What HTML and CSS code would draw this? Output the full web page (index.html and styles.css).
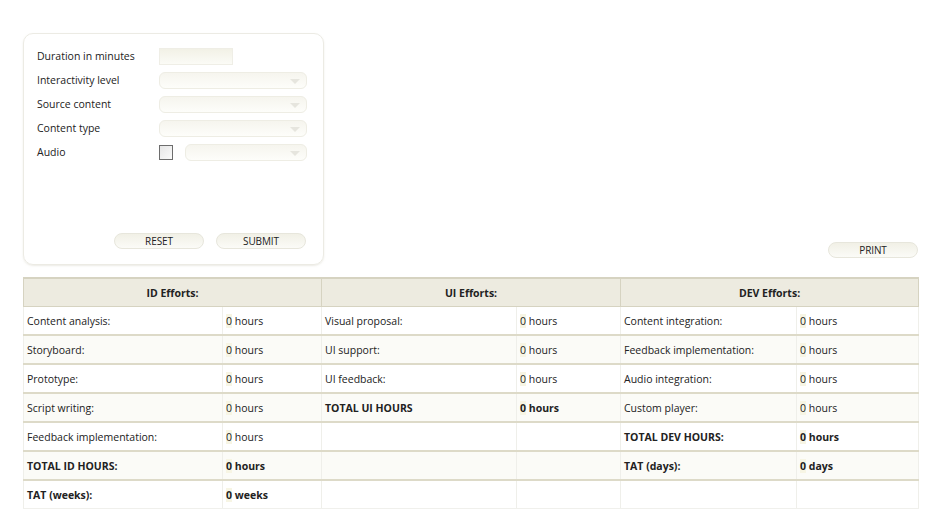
FILE: index.html
```html
<!DOCTYPE html>
<html>
<head>
<meta charset="utf-8">
<link rel="stylesheet" href="styles.css">
</head>
<body>
<div class="page">
  <div class="top">
    <form class="panel">
      <div class="frow"><span class="lbl">Duration in minutes</span><span class="txt"></span></div>
      <div class="frow"><span class="lbl">Interactivity level</span><span class="sel"><i class="arr"></i></span></div>
      <div class="frow"><span class="lbl">Source content</span><span class="sel"><i class="arr"></i></span></div>
      <div class="frow"><span class="lbl">Content type</span><span class="sel"><i class="arr"></i></span></div>
      <div class="frow"><span class="lbl">Audio</span><span class="chk"></span><span class="sel sel-short"><i class="arr"></i></span></div>
      <div class="btns">
        <span class="btn">RESET</span>
        <span class="btn">SUBMIT</span>
      </div>
    </form>
    <span class="btn print">PRINT</span>
  </div>
  <table class="grid">
    <colgroup>
      <col style="width:199px"><col style="width:99px">
      <col style="width:195px"><col style="width:104px">
      <col style="width:176px"><col style="width:122px">
    </colgroup>
    <thead>
      <tr><th colspan="2">ID Efforts:</th><th colspan="2">UI Efforts:</th><th colspan="2">DEV Efforts:</th></tr>
    </thead>
    <tbody>
      <tr>
        <td>Content analysis:</td><td><span class="v">0</span> hours</td>
        <td>Visual proposal:</td><td><span class="v">0</span> hours</td>
        <td>Content integration:</td><td><span class="v">0</span> hours</td>
      </tr>
      <tr>
        <td>Storyboard:</td><td><span class="v">0</span> hours</td>
        <td>UI support:</td><td><span class="v">0</span> hours</td>
        <td>Feedback implementation:</td><td><span class="v">0</span> hours</td>
      </tr>
      <tr>
        <td>Prototype:</td><td><span class="v">0</span> hours</td>
        <td>UI feedback:</td><td><span class="v">0</span> hours</td>
        <td>Audio integration:</td><td><span class="v">0</span> hours</td>
      </tr>
      <tr>
        <td>Script writing:</td><td><span class="v">0</span> hours</td>
        <td class="b">TOTAL UI HOURS</td><td class="b"><span class="v">0</span> hours</td>
        <td>Custom player:</td><td><span class="v">0</span> hours</td>
      </tr>
      <tr>
        <td>Feedback implementation:</td><td><span class="v">0</span> hours</td>
        <td></td><td></td>
        <td class="b">TOTAL DEV HOURS:</td><td class="b"><span class="v">0</span> hours</td>
      </tr>
      <tr>
        <td class="b">TOTAL ID HOURS:</td><td class="b"><span class="v">0</span> hours</td>
        <td></td><td></td>
        <td class="b">TAT (days):</td><td class="b"><span class="v">0</span> days</td>
      </tr>
      <tr>
        <td class="b">TAT (weeks):</td><td class="b"><span class="v">0</span> weeks</td>
        <td></td><td></td>
        <td></td><td></td>
      </tr>
    </tbody>
  </table>
</div>
</body>
</html>
```

FILE: styles.css
```css
html, body {
  margin: 0;
  padding: 0;
  background: #ffffff;
}
body {
  font-family: "Open Sans", "DejaVu Sans", sans-serif;
  font-size: 10.5px;
  color: #222;
}
.page {
  padding: 33px 0 0 23px;
  width: 895px;
}
.top {
  display: flex;
  justify-content: space-between;
  align-items: flex-end;
}
.panel {
  box-sizing: border-box;
  width: 301px;
  height: 232px;
  margin: 0;
  border: 1px solid #ecebe4;
  border-radius: 10px;
  box-shadow: 0 1px 2px rgba(200, 198, 180, 0.35);
  padding: 14px 16px 15px 13px;
  display: flex;
  flex-direction: column;
  gap: 8px;
}
.frow {
  display: flex;
  align-items: center;
  height: 16px;
}
.lbl {
  width: 122px;
  color: #222;
}
.txt {
  box-sizing: border-box;
  width: 74px;
  height: 17px;
  border: 1px solid #efeee6;
  background: linear-gradient(#f2f1e6, #fbfbf6);
}
.sel {
  position: relative;
  box-sizing: border-box;
  width: 148px;
  height: 17px;
  border: 1px solid #eeede4;
  border-radius: 6px;
  background: linear-gradient(#f6f5ee, #fdfdfa);
}
.sel-short {
  width: 122px;
  margin-left: 12px;
}
.arr {
  position: absolute;
  right: 6px;
  top: 6px;
  width: 0;
  height: 0;
  border-left: 5px solid transparent;
  border-right: 5px solid transparent;
  border-top: 5px solid #e6e5de;
}
.chk {
  box-sizing: border-box;
  width: 14px;
  height: 15px;
  border: 1px solid #6d6d6d;
  background: linear-gradient(135deg, #e6e6e6, #fafafa);
}
.btns {
  margin-top: auto;
  display: flex;
  justify-content: flex-end;
  gap: 12px;
  padding-right: 1px;
}
.btn {
  box-sizing: border-box;
  display: inline-flex;
  align-items: center;
  justify-content: center;
  width: 90px;
  height: 16px;
  border: 1px solid #e7e6dc;
  border-radius: 8px;
  background: linear-gradient(#f1f0e6, #fbfbf7);
  font-size: 10px;
  color: #222;
  letter-spacing: -0.1px;
}
.print {
  margin-bottom: 7px;
}
.grid {
  margin-top: 12px;
  width: 895px;
  table-layout: fixed;
  border-collapse: collapse;
}
.grid th {
  height: 27px;
  background: #edebe0;
  border: 1px solid #d6d3c1;
  border-top-width: 2px;
  font-weight: 700;
  font-size: 10.5px;
  text-align: center;
  padding: 0;
}
.grid td {
  height: 27px;
  padding: 0 0 0 3px;
  border-left: 1px solid #efefea;
  border-right: 1px solid #efefea;
  border-bottom: 1px solid #e6e4d6;
  white-space: nowrap;
  vertical-align: middle;
}
.grid tbody tr:nth-child(even) td {
  background: #fbfbf7;
  border-top: 2px solid #dddac8;
  border-bottom: 2px solid #dddac8;
}
.grid tbody tr:last-child td {
  border-bottom: 1px solid #f0f0ec;
}
.grid td.b {
  font-weight: 700;
}
.v {
  display: inline-block;
  background: #f7f5e4;
  line-height: 14px;
}
```
